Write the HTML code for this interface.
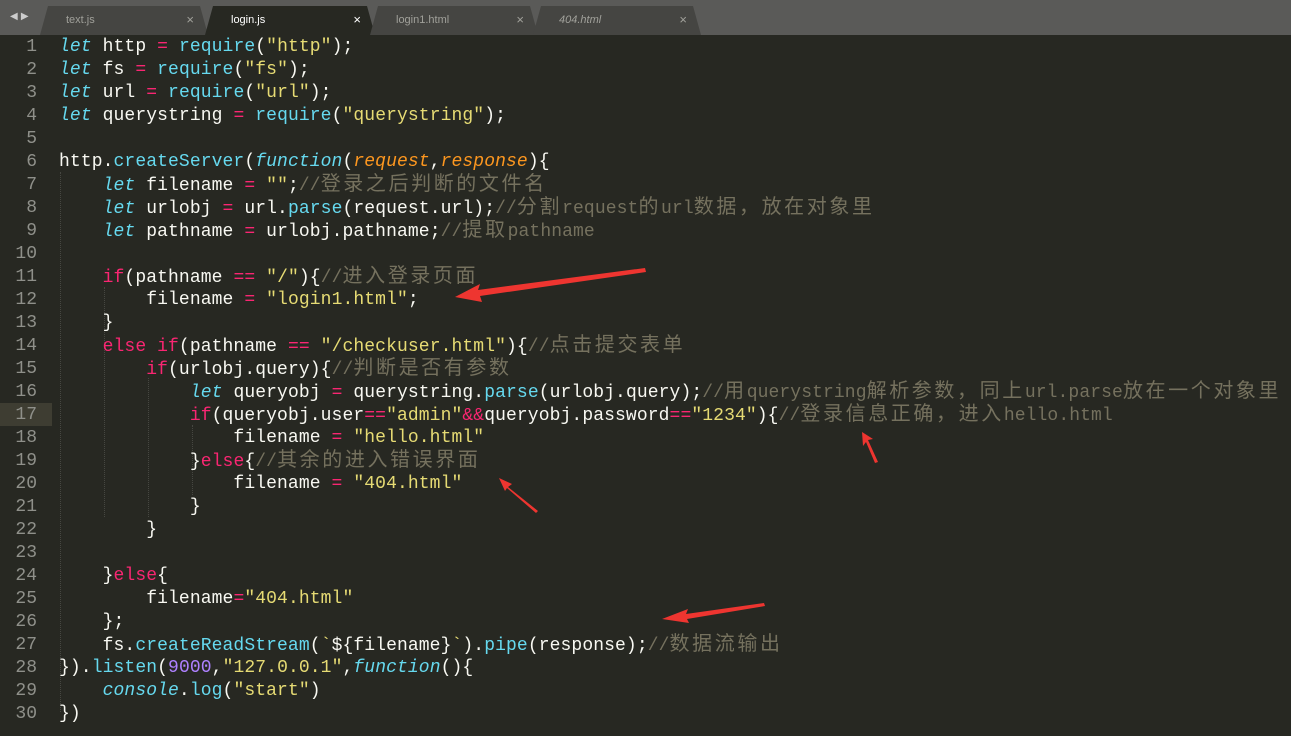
<!DOCTYPE html>
<html><head><meta charset="utf-8"><style>
html,body{margin:0;padding:0}
body{width:1291px;height:736px;background:#272822;position:relative;overflow:hidden;font-family:"Liberation Mono","Noto Sans CJK SC",monospace;font-size:18px;color:#f8f8f2}
.bar{position:absolute;left:0;top:0;width:1291px;height:35px;background:#5a5a58}
.tab{position:absolute;top:6px;height:29px;background:#454542;clip-path:polygon(8px 0,calc(100% - 8px) 0,100% 100%,0 100%);font-family:"Liberation Sans",sans-serif;font-size:11px;color:#a0a09a}
.tab span{position:absolute;left:26px;top:8px}
.tab b{position:absolute;right:14px;top:6px;font-weight:normal;font-size:13px}
.tab.act{background:#272822;color:#fff}
.ln{position:absolute;left:0;width:37px;text-align:right;color:#8f908a;height:23px;line-height:23px}
.l{position:absolute;left:59px;white-space:pre;height:23px;line-height:23px;letter-spacing:0.1px}
.k{color:#f92672}.f{color:#66d9ef}.i{color:#66d9ef;font-style:italic}.s{color:#e6db74}.c{color:#75715e}.p{color:#fd971f;font-style:italic}.n{color:#ae81ff}
.z{font-size:20px;letter-spacing:2.6px}
.g{position:absolute;width:1px;border-left:1px dotted #464741}
</style></head><body>
<div class="bar"></div>
<div style="position:absolute;left:10px;top:11px;color:#ccc;font-size:10px;font-family:'DejaVu Sans',sans-serif">◀ ▶</div>
<div class="tab" style="left:40px;width:168px"><span style="font-style:normal">text.js</span><b>×</b></div>
<div class="tab act" style="left:205px;width:170px"><span>login.js</span><b>×</b></div>
<div class="tab" style="left:370px;width:168px"><span>login1.html</span><b>×</b></div>
<div class="tab" style="left:533px;width:168px"><span style="font-style:italic">404.html</span><b>×</b></div>
<div style="position:absolute;left:0;top:403px;width:52px;height:23px;background:#3e3d32"></div>
<div class="g" style="left:60px;top:172px;height:540px"></div>
<div class="g" style="left:104px;top:287px;height:230px"></div>
<div class="g" style="left:148px;top:378px;height:139px"></div>
<div class="g" style="left:192px;top:425px;height:70px"></div>
<div id="c"></div>
<script>
var L=[
'<span class="i">let</span> http <span class="k">=</span> <span class="f">require</span>(<span class="s">"http"</span>);',
'<span class="i">let</span> fs <span class="k">=</span> <span class="f">require</span>(<span class="s">"fs"</span>);',
'<span class="i">let</span> url <span class="k">=</span> <span class="f">require</span>(<span class="s">"url"</span>);',
'<span class="i">let</span> querystring <span class="k">=</span> <span class="f">require</span>(<span class="s">"querystring"</span>);',
'',
'http.<span class="f">createServer</span>(<span class="i">function</span>(<span class="p">request</span>,<span class="p">response</span>){',
'    <span class="i">let</span> filename <span class="k">=</span> <span class="s">""</span>;<span class="c">//<span class="z">登录之后判断的文件名</span></span>',
'    <span class="i">let</span> urlobj <span class="k">=</span> url.<span class="f">parse</span>(request.url);<span class="c">//<span class="z">分割</span>request<span class="z">的</span>url<span class="z">数据，放在对象里</span></span>',
'    <span class="i">let</span> pathname <span class="k">=</span> urlobj.pathname;<span class="c">//<span class="z">提取</span>pathname</span>',
'',
'    <span class="k">if</span>(pathname <span class="k">==</span> <span class="s">"/"</span>){<span class="c">//<span class="z">进入登录页面</span></span>',
'        filename <span class="k">=</span> <span class="s">"login1.html"</span>;',
'    }',
'    <span class="k">else if</span>(pathname <span class="k">==</span> <span class="s">"/checkuser.html"</span>){<span class="c">//<span class="z">点击提交表单</span></span>',
'        <span class="k">if</span>(urlobj.query){<span class="c">//<span class="z">判断是否有参数</span></span>',
'            <span class="i">let</span> queryobj <span class="k">=</span> querystring.<span class="f">parse</span>(urlobj.query);<span class="c">//<span class="z">用</span>querystring<span class="z">解析参数，同上</span>url.parse<span class="z">放在一个对象里</span></span>',
'            <span class="k">if</span>(queryobj.user<span class="k">==</span><span class="s">"admin"</span><span class="k">&amp;&amp;</span>queryobj.password<span class="k">==</span><span class="s">"1234"</span>){<span class="c">//<span class="z">登录信息正确，进入</span>hello.html</span>',
'                filename <span class="k">=</span> <span class="s">"hello.html"</span>',
'            }<span class="k">else</span>{<span class="c">//<span class="z">其余的进入错误界面</span></span>',
'                filename <span class="k">=</span> <span class="s">"404.html"</span>',
'            }',
'        }',
'',
'    }<span class="k">else</span>{',
'        filename<span class="k">=</span><span class="s">"404.html"</span>',
'    };',
'    fs.<span class="f">createReadStream</span>(<span class="s">`</span>${filename}<span class="s">`</span>).<span class="f">pipe</span>(response);<span class="c">//<span class="z">数据流输出</span></span>',
'}).<span class="f">listen</span>(<span class="n">9000</span>,<span class="s">"127.0.0.1"</span>,<span class="i">function</span>(){',
'    <span class="i">console</span>.<span class="f">log</span>(<span class="s">"start"</span>)',
'})'];
var h='';
for(var j=0;j<L.length;j++){var t=(35.5+j*23.03).toFixed(1);
h+='<div class="ln" style="top:'+t+'px">'+(j+1)+'</div><div class="l" style="top:'+t+'px">'+L[j]+'</div>';}
document.getElementById('c').innerHTML=h;
</script>
<svg style="position:absolute;left:0;top:0" width="1291" height="736">
<g fill="#ee3530">
<polygon points="645,268 478,290 480,284 455,297 482,302 480,296 646,272"/>
<polygon points="878,462 868,440 873,439 862,432 863,446 866,442 875,463"/>
<polygon points="538,511 508,487 512,484 499,478 505,491 507,488 536,513"/>
<polygon points="764,603 686,614 688,609 662,619 689,623 687,619 765,606"/>
</g>
</svg>
</body></html>
